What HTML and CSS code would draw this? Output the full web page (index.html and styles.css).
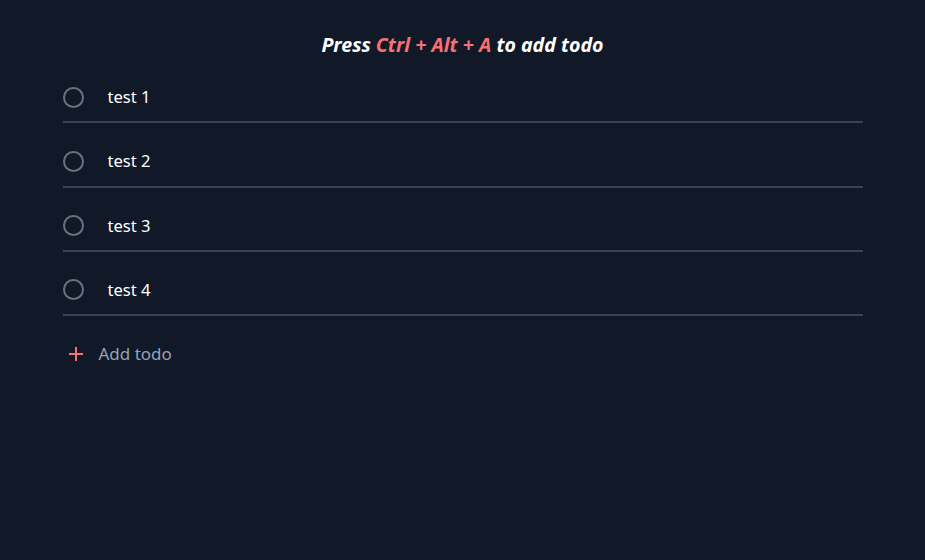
FILE: index.html
```html
<!DOCTYPE html>
<html lang="en">
<head>
<meta charset="utf-8">
<title>Todos</title>
<link rel="stylesheet" href="styles.css">
</head>
<body>
<main class="page">
  <h1 class="hint">Press <span class="key">Ctrl + Alt + A</span> to add todo</h1>
  <ul class="list">
    <li class="todo"><span class="check"></span><span class="label">test 1</span></li>
    <li class="todo"><span class="check"></span><span class="label">test 2</span></li>
    <li class="todo"><span class="check"></span><span class="label">test 3</span></li>
    <li class="todo"><span class="check"></span><span class="label">test 4</span></li>
  </ul>
  <div class="add">
    <svg class="plus" width="16" height="16" viewBox="0 0 16 16"><path d="M8 1v14M1 8h14" stroke="#f87171" stroke-width="2" fill="none"/></svg>
    <span class="add-label">Add todo</span>
  </div>
</main>
</body>
</html>
```
FILE: styles.css
```css
html, body {
  margin: 0;
  padding: 0;
  background: #111827;
  height: 100%;
}
body {
  font-family: "Noto Sans", "Open Sans", sans-serif;
  color: #ffffff;
}
.page {
  width: 800px;
  margin: 0 auto;
  padding-top: 30px;
}
.hint {
  margin: 0;
  text-align: center;
  font-size: 19.6px;
  line-height: 29px;
  font-weight: 700;
  font-style: italic;
  color: #ffffff;
}
.key {
  color: #f87171;
}
.list {
  list-style: none;
  margin: 0;
  padding: 0;
}
.todo {
  display: flex;
  align-items: center;
  margin-top: 14px;
  padding: 12px 0 12.33px;
  line-height: 24px;
  border-bottom: 2px solid #374151;
}
.check {
  width: 17px;
  height: 17px;
  border: 2px solid #6b7280;
  border-radius: 50%;
  flex: none;
  margin-right: 24px;
}
.label {
  font-size: 16.6px;
}
.add {
  display: flex;
  align-items: center;
  margin-top: 14px;
  padding: 12px 0 12px 5px;
  line-height: 24px;
}
.plus {
  flex: none;
  margin-right: 15px;
}
.add-label {
  font-size: 17px;
  color: #94a3b8;
}
```
